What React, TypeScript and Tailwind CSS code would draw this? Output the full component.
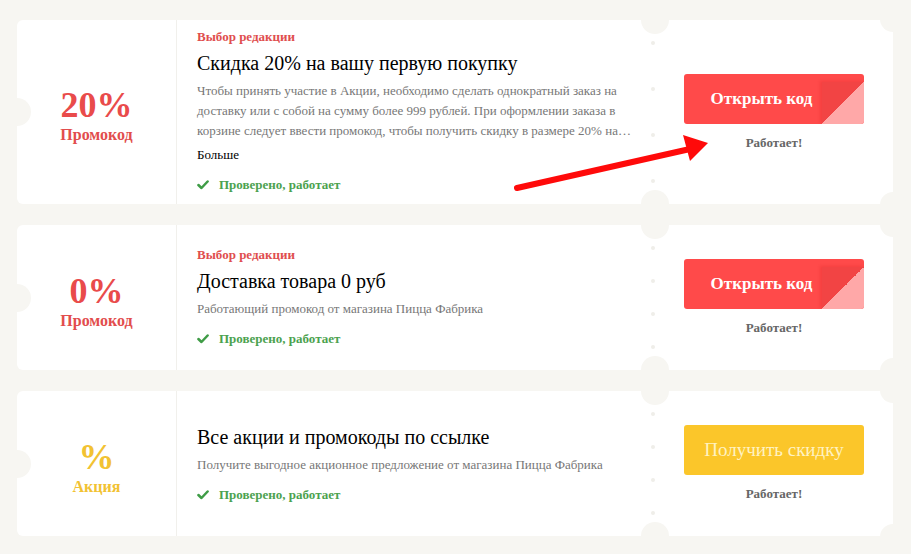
import React from "react";

const PAGE = "bg-[#f7f6f2]";

const Check = () => (
  <svg width="12" height="10" viewBox="0 0 12 10" className="shrink-0">
    <path d="M1.4 5 L4.5 8 L10.6 1.5" fill="none" stroke="#3f9c46" strokeWidth="2.5" strokeLinecap="round" strokeLinejoin="round" />
  </svg>
);

type CardProps = {
  h: string;
  value: string;
  kind: string;
  yellow?: boolean;
  label?: boolean;
  title: string;
  desc: string;
  more?: boolean;
};

function Card({ h, value, kind, yellow, label, title, desc, more }: CardProps) {
  return (
    <div className={`relative flex bg-white rounded-md ${h}`}>
      <div className={`absolute left-[-14px] top-1/2 -translate-y-1/2 w-7 h-7 rounded-full ${PAGE}`} />
      <div className={`absolute right-[-13px] top-[-14px] w-[26px] h-[26px] rounded-full ${PAGE}`} />
      <div className={`absolute right-[-13px] bottom-[-14px] w-[26px] h-[26px] rounded-full ${PAGE}`} />

      <div className="w-[160px] shrink-0 border-r border-[#f1f0ec] flex flex-col items-center justify-center pt-[6px]">
        <div className={`text-[36px] leading-[40px] font-bold ${yellow ? "text-[#f2c232]" : "text-[#e94b4b]"}`}>{value}</div>
        <div className={`text-[16px] leading-[20px] font-bold ${yellow ? "text-[#f2c232]" : "text-[#e24d4d]"}`}>{kind}</div>
      </div>

      <div className="w-[478px] shrink-0 flex flex-col justify-center pl-5 pr-5">
        {label && <div className="text-[13px] leading-[16px] font-bold text-[#e04e4e]">Выбор редакции</div>}
        <div className={`text-[20px] leading-[28px] text-black ${label ? "mt-[4px]" : ""}`}>{title}</div>
        <div className="mt-[4px] text-[13px] leading-[20px] text-[#777777]">{desc}</div>
        {more && <div className="mt-[4px] text-[13px] leading-[20px] text-black">Больше</div>}
        <div className="mt-[10px] flex items-center gap-[10px] text-[13px] leading-[20px] font-bold text-[#4ca24f]">
          <Check />
          <span>Проверено, работает</span>
        </div>
      </div>

      <div className="relative flex-1 flex flex-col items-center justify-center">
        <div className={`absolute left-[-14px] top-[-14px] w-7 h-7 rounded-full ${PAGE}`} />
        <div className={`absolute left-[-14px] bottom-[-14px] w-7 h-7 rounded-full ${PAGE}`} />
        <div className="absolute left-[-4px] top-[14px] bottom-[14px] flex flex-col justify-between py-[7px]">
          <div className="w-[4px] h-[4px] rounded-full bg-[#efeee9]" />
          <div className="w-[4px] h-[4px] rounded-full bg-[#efeee9]" />
          <div className="w-[4px] h-[4px] rounded-full bg-[#efeee9]" />
          <div className="w-[4px] h-[4px] rounded-full bg-[#efeee9]" />
        </div>
        {yellow ? (
          <div className="w-[180px] h-[50px] rounded-[3px] bg-[#fbc62a] flex items-center justify-center text-[19px] text-[#fff2c2]">
            Получить скидку
          </div>
        ) : (
          <div className="relative w-[180px] h-[50px] rounded-[3px] overflow-hidden bg-[#ff4a4a] flex items-center justify-center pr-[25px] text-[17px] font-bold text-white">
            Открыть код
            <div className="absolute right-0 bottom-0 w-[42px] h-[42px] bg-[linear-gradient(to_bottom_right,#f24444_50%,#ffa8a8_50%)] shadow-[-2px_-1px_3px_rgba(180,0,0,0.15)]" />
          </div>
        )}
        <div className="mt-[11px] text-[13px] leading-[16px] font-bold text-[#666666]">Работает!</div>
      </div>
    </div>
  );
}

export default function App() {
  return (
    <div className={`relative w-[911px] h-[554px] overflow-hidden ${PAGE} pt-5 pl-[17px] [font-family:'Liberation_Serif',serif]`}>
      <div className="flex flex-col gap-[21px] w-[876px]">
        <Card
          h="h-[184px]"
          value="20%"
          kind="Промокод"
          label
          title="Скидка 20% на вашу первую покупку"
          desc="Чтобы принять участие в Акции, необходимо сделать однократный заказ на доставку или с собой на сумму более 999 рублей. При оформлении заказа в корзине следует ввести промокод, чтобы получить скидку в размере 20% на…"
          more
        />
        <Card
          h="h-[145px]"
          value="0%"
          kind="Промокод"
          label
          title="Доставка товара 0 руб"
          desc="Работающий промокод от магазина Пицца Фабрика"
        />
        <Card
          h="h-[145px]"
          value="%"
          kind="Акция"
          yellow
          title="Все акции и промокоды по ссылке"
          desc="Получите выгодное акционное предложение от магазина Пицца Фабрика"
        />
      </div>
      <svg className="absolute left-0 top-0 pointer-events-none" width="911" height="554" viewBox="0 0 911 554">
        <line x1="517" y1="188" x2="690" y2="149" stroke="#ff0a0a" strokeWidth="6" strokeLinecap="round" />
        <polygon points="708,143 683,135 690,161" fill="#ff0a0a" />
      </svg>
    </div>
  );
}
